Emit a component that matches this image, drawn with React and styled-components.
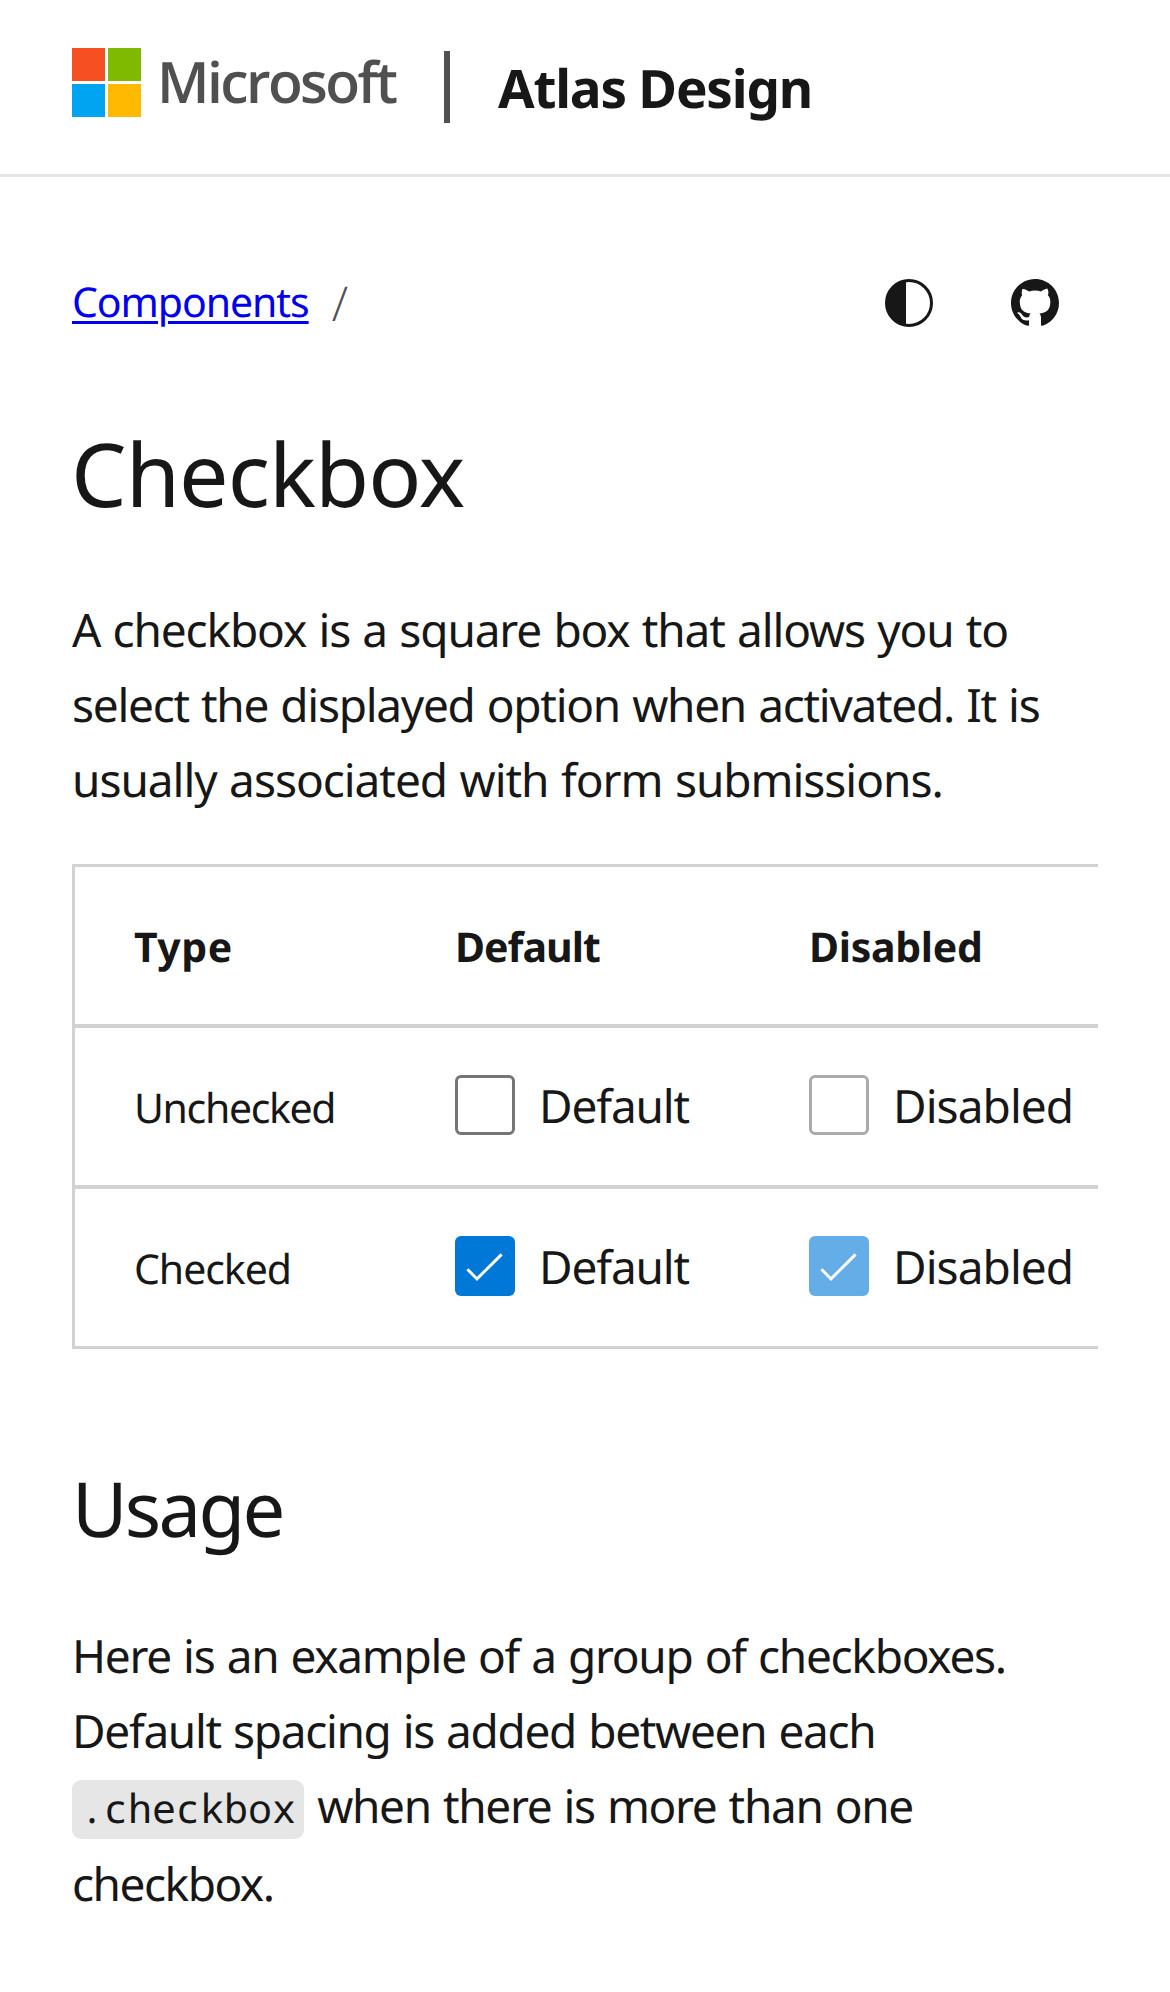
import React from "react";
import styled, { createGlobalStyle } from "styled-components";

const GlobalStyle = createGlobalStyle`
  *, *::before, *::after { box-sizing: border-box; }
  html, body { margin: 0; padding: 0; background: #fff; }
  body {
    color: #171717;
    font-family: "Noto Sans", "Open Sans", sans-serif;
    text-rendering: geometricPrecision;
    overflow: hidden;
  }
`;

const Page = styled.div`
  width: 1170px;
  height: 1992px;
  overflow: hidden;
`;

const Header = styled.header`
  display: flex;
  align-items: flex-start;
  height: 177px;
  padding: 48px 72px 0;
  border-bottom: 3px solid #e6e6e6;
`;

const LogoTiles = styled.div`
  display: grid;
  grid-template-columns: 33px 33px;
  grid-auto-rows: 33px;
  gap: 3px;
`;

const Tile = styled.span`
  background: ${(p) => p.$color};
`;

const Wordmark = styled.span`
  width: 287px;
  margin-top: 5px;
  padding-left: 16px;
  color: #505050;
  font-family: "Open Sans", "Noto Sans", sans-serif;
  font-size: 57px;
  font-weight: 600;
  line-height: 57px;
  letter-spacing: -2.6px;
`;

const Divider = styled.span`
  width: 6px;
  height: 72px;
  margin: 3px 48px 0 16px;
  background: #505050;
`;

const SiteName = styled.span`
  margin-top: 10px;
  font-size: 53px;
  font-weight: 700;
  line-height: 60px;
  letter-spacing: -1.21px;
`;

const Main = styled.main`
  padding: 94px 72px 0;
`;

const Toolbar = styled.div`
  display: flex;
  align-items: center;
  justify-content: space-between;
  height: 60px;
  padding-right: 39px;
`;

const Breadcrumb = styled.nav`
  display: flex;
  align-items: center;
  gap: 23px;
`;

const CrumbLink = styled.a`
  padding-top: 2px;
  color: #0000ee;
  font-size: 41px;
  line-height: 60px;
  letter-spacing: -1.07px;
  text-decoration: underline;
  text-decoration-thickness: 3px;
  text-underline-offset: 4px;
`;

const Slash = styled.span`
  padding-top: 6px;
  color: #505050;
  font-family: "Open Sans", "Noto Sans", sans-serif;
  font-size: 48px;
  font-weight: 350;
  line-height: 60px;
`;

const Actions = styled.div`
  display: flex;
  gap: 78px;
  padding-top: 4px;
`;

const Icon = styled.svg`
  display: block;
  width: 48px;
  height: 48px;
  color: #171717;
`;

const Title = styled.h1`
  margin: 88px 0 66px -1px;
  font-size: 88px;
  font-weight: 400;
  line-height: 108px;
  letter-spacing: -0.95px;
`;

const Subtitle = styled.h2`
  margin: 112px 0 62px;
  font-size: 76px;
  font-weight: 400;
  line-height: 96px;
  letter-spacing: -2.7px;
`;

const Paragraph = styled.p`
  margin: 0;
  font-size: 46px;
  line-height: 75px;
  word-spacing: 1.5px;
`;

const Line = styled.span`
  display: block;
  white-space: nowrap;
  letter-spacing: ${(p) => p.$tracking}px;
  padding-bottom: ${(p) => (p.$hasCode ? 3 : 0)}px;
`;

const Code = styled.code`
  margin-right: 1px;
  padding: 0 8px 4px;
  border-radius: 9px;
  background: #e6e6e6;
  font-family: "Noto Sans Mono", "DejaVu Sans Mono", monospace;
  font-size: 40px;
  line-height: 40px;
  letter-spacing: 0;
  word-spacing: 0;
`;

const Table = styled.div`
  margin-top: 46px;
  border: 3px solid #d2d2d2;
  border-right: 0;
  overflow: hidden;
`;

const Row = styled.div`
  display: grid;
  grid-template-columns: 321px 354px 1fr;
  align-items: center;
  height: ${(p) => (p.$first ? "157" : "161")}px;
  padding-left: 59px;
  border-top: ${(p) => (p.$first ? "0" : "4px solid #d2d2d2")};
`;

const Cell = styled.span`
  font-size: 41px;
  font-weight: ${(p) => (p.$head ? 700 : 400)};
  line-height: 60px;
  padding-top: 3px;
  letter-spacing: ${(p) => p.$tracking}px;
`;

const CheckLabel = styled.label`
  display: flex;
  align-items: center;
  gap: 24px;
  padding-bottom: 3px;
  font-size: 46px;
  line-height: 60px;
  letter-spacing: ${(p) => p.$tracking}px;
  white-space: nowrap;
`;

const LabelText = styled.span`
  height: 60px;
  line-height: 62px;
`;

const Box = styled.span`
  flex: none;
  width: 60px;
  height: 60px;
  border: ${(p) => (p.$checked ? "0" : "3px solid #757575")};
  border-radius: 6px;
  background: ${(p) => (p.$checked ? "#0078d7" : "#fff")};
  opacity: ${(p) => (p.$disabled ? 0.6 : 1)};
`;

const Tick = styled.svg`
  display: block;
  width: 60px;
  height: 60px;
`;

function Checkbox({ label, tracking, checked, disabled }) {
  return (
    <CheckLabel $tracking={tracking}>
      <Box $checked={checked} $disabled={disabled}>
        {checked && (
          <Tick viewBox="0 0 60 60" fill="none" stroke="#fff" strokeWidth="2.9">
            <path d="M12.4 33.2 22 42.9 46.6 18.4" />
          </Tick>
        )}
      </Box>
      <LabelText>{label}</LabelText>
    </CheckLabel>
  );
}

const rows = [
  { name: "Unchecked", tracking: -1.36, checked: false },
  { name: "Checked", tracking: -1.05, checked: true },
];

export default function App() {
  return (
    <Page>
      <GlobalStyle />
      <Header>
        <LogoTiles>
          <Tile $color="#f65022" />
          <Tile $color="#7fba00" />
          <Tile $color="#00a4f1" />
          <Tile $color="#ffb901" />
        </LogoTiles>
        <Wordmark>Microsoft</Wordmark>
        <Divider />
        <SiteName>Atlas Design</SiteName>
      </Header>
      <Main>
        <Toolbar>
          <Breadcrumb>
            <CrumbLink href="#">Components</CrumbLink>
            <Slash>/</Slash>
          </Breadcrumb>
          <Actions>
            <Icon viewBox="0 0 48 48">
              <circle cx="24" cy="24" r="22.5" fill="none" stroke="currentColor" strokeWidth="3" />
              <path fill="currentColor" d="M21 1.2A23 23 0 0 0 21 46.8Z" />
            </Icon>
            <Icon viewBox="0 0 16 16">
              <path
                fill="currentColor"
                d="M8 0C3.58 0 0 3.58 0 8c0 3.54 2.29 6.53 5.47 7.59.4.07.55-.17.55-.38 0-.19-.01-.82-.01-1.49-2.01.37-2.53-.49-2.69-.94-.09-.23-.48-.94-.82-1.13-.28-.15-.68-.52-.01-.53.63-.01 1.08.58 1.23.82.72 1.21 1.87.87 2.33.66.07-.52.28-.87.51-1.07-1.78-.2-3.64-.89-3.64-3.95 0-.87.31-1.59.82-2.15-.08-.2-.36-1.02.08-2.12 0 0 .67-.21 2.2.82.64-.18 1.32-.27 2-.27.68 0 1.36.09 2 .27 1.53-1.04 2.2-.82 2.2-.82.44 1.1.16 1.92.08 2.12.51.56.82 1.27.82 2.15 0 3.07-1.87 3.75-3.65 3.95.29.25.54.73.54 1.48 0 1.07-.01 1.93-.01 2.2 0 .21.15.46.55.38A8.013 8.013 0 0 0 16 8c0-4.42-3.58-8-8-8z"
              />
            </Icon>
          </Actions>
        </Toolbar>
        <Title>Checkbox</Title>
        <Paragraph>
          <Line $tracking={-1.14}>A checkbox is a square box that allows you to</Line>
          <Line $tracking={-1.28}>select the displayed option when activated. It is</Line>
          <Line $tracking={-1.03}>usually associated with form submissions.</Line>
        </Paragraph>
        <Table>
          <Row $first>
            <Cell $head $tracking={0.5}>Type</Cell>
            <Cell $head $tracking={-0.96}>Default</Cell>
            <Cell $head $tracking={-0.3}>Disabled</Cell>
          </Row>
          {rows.map((r) => (
            <Row key={r.name}>
              <Cell $tracking={r.tracking}>{r.name}</Cell>
              <Checkbox label="Default" tracking={-1.15} checked={r.checked} />
              <Checkbox label="Disabled" tracking={-0.94} checked={r.checked} disabled />
            </Row>
          ))}
        </Table>
        <Subtitle>Usage</Subtitle>
        <Paragraph>
          <Line $tracking={-1.28}>Here is an example of a group of checkboxes.</Line>
          <Line $tracking={-1.32}>Default spacing is added between each</Line>
          <Line $tracking={-1.32} $hasCode>
            <Code>.checkbox</Code> when there is more than one
          </Line>
          <Line $tracking={-1.49}>checkbox.</Line>
        </Paragraph>
      </Main>
    </Page>
  );
}
